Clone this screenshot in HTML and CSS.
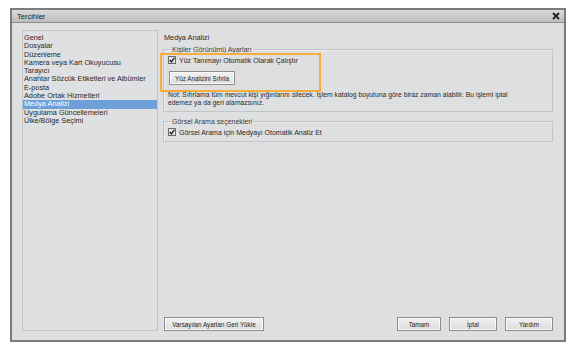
FILE: index.html
```html
<!DOCTYPE html>
<html lang="tr">
  <head>
    <meta charset="UTF-8" />
    <title>Tercihler</title>
    <link rel="stylesheet" href="styles.css">
  </head>
  <body>
    <div class="window">
      <div class="titlebar">
        <span class="title">Tercihler</span>
        <svg class="close" width="8" height="8" viewBox="0 0 8 8">
          <path d="M1 1 L7 7 M7 1 L1 7" stroke="#222" stroke-width="1.8" />
        </svg>
      </div>
      <div class="content">
        <ul class="nav">
          <li>Genel</li>
          <li>Dosyalar</li>
          <li>Düzenleme</li>
          <li>Kamera veya Kart Okuyucusu</li>
          <li>Tarayıcı</li>
          <li>Anahtar Sözcük Etiketleri ve Albümler</li>
          <li>E-posta</li>
          <li>Adobe Ortak Hizmetleri</li>
          <li class="selected">Medya Analizi</li>
          <li>Uygulama Güncellemeleri</li>
          <li>Ülke/Bölge Seçimi</li>
        </ul>
        <div class="main">
          <div class="heading">Medya Analizi</div>

          <fieldset class="group people">
            <legend>Kişiler Görünümü Ayarları</legend>
            <label class="check">
              <svg width="8" height="8" viewBox="0 0 8 8">
                <rect x="0.5" y="0.5" width="7" height="7" fill="#e6e6e6" stroke="#6a6a6a" />
                <path d="M1.8 4 L3.4 5.8 L6.4 1.8" fill="none" stroke="#1e1e1e" stroke-width="1.4" />
              </svg>
              Yüz Tanımayı Otomatik Olarak Çalıştır
            </label>
            <button class="btn reset">Yüz Analizini Sıfırla</button>
            <p class="note">Not: Sıfırlama tüm mevcut kişi yığınlarını silecek. İşlem katalog boyutuna göre biraz zaman alabilir. Bu işlemi iptal<br>edemez ya da geri alamazsınız.</p>
            <div class="highlight"></div>
          </fieldset>

          <fieldset class="group search">
            <legend>Görsel Arama seçenekleri</legend>
            <label class="check">
              <svg width="8" height="8" viewBox="0 0 8 8">
                <rect x="0.5" y="0.5" width="7" height="7" fill="#e6e6e6" stroke="#6a6a6a" />
                <path d="M1.8 4 L3.4 5.8 L6.4 1.8" fill="none" stroke="#1e1e1e" stroke-width="1.4" />
              </svg>
              Görsel Arama için Medyayı Otomatik Analiz Et
            </label>
          </fieldset>

          <div class="footer">
            <button class="btn defaults">Varsayılan Ayarları Geri Yükle</button>
            <div class="actions">
              <button class="btn ok">Tamam</button>
              <button class="btn cancel">İptal</button>
              <button class="btn help">Yardım</button>
            </div>
          </div>
        </div>
      </div>
    </div>
  </body>
</html>
```

FILE: styles.css
```css
body {
  margin: 0;
  background: #ffffff;
  font-family: "Liberation Sans", Arial, sans-serif;
  font-size: 7px;
  color: #2a2a2a;
}
.window {
  width: 552px;
  height: 330px;
  margin: 8px 0 0 10px;
  border: 2px solid #7c7c7c;
  background: #dedfe1;
  display: flex;
  flex-direction: column;
}
.titlebar {
  height: 12px;
  padding: 0 4px 0 5px;
  background: linear-gradient(#dadada, #bdbdbd);
  border-bottom: 1px solid #8e8e8e;
  display: flex;
  align-items: center;
  justify-content: space-between;
}
.title {
  font-size: 7.5px;
  color: #1e1e1e;
}
.content {
  flex: 1;
  display: flex;
  gap: 5px;
  padding: 7px 11px 9px 10px;
}
.nav {
  width: 134px;
  margin: 0;
  padding: 3px 0 0 0;
  list-style: none;
  border: 1px solid #c3c4c6;
  background: #dfe0e2;
}
.nav li {
  height: 8.3px;
  line-height: 8.3px;
  padding-left: 1px;
  font-size: 7.3px;
}
.nav li.selected {
  background: #6f9fd9;
  color: #ffffff;
}
.main {
  flex: 1;
  display: flex;
  flex-direction: column;
}
.heading {
  margin: 3px 0 0 1px;
  font-size: 7.3px;
}
.group {
  position: relative;
  margin: 0;
  padding: 0 4px 4px 4px;
  border: 1px solid #c2c3c5;
  box-shadow: inset 1px 1px 0 #ececec;
}
.group legend {
  padding: 0 1px;
  margin-left: 3px;
  font-size: 7px;
  color: #3a3a3a;
}
.people {
  margin-top: 4px;
  height: 60px;
}
.search {
  margin-top: 6px;
  height: 18px;
}
.check {
  display: flex;
  align-items: center;
  gap: 3px;
  height: 10px;
  font-size: 7px;
}
.people .check {
  margin-top: 2px;
}
.search .check {
  margin-top: 2px;
}
.btn {
  font-family: inherit;
  font-size: 6.3px;
  color: #222;
  height: 14px;
  padding: 0 4px;
  white-space: nowrap;
  border: 1px solid #8d8d8d;
  background: linear-gradient(#f2f2f2, #dcdcdc);
  box-shadow: inset 0 0 0 1px #fafafa;
}
.reset {
  display: block;
  margin: 6px 0 0 1px;
  width: 66px;
}
.note {
  margin: 6px 0 0 0;
  line-height: 8px;
  font-size: 6.8px;
  white-space: nowrap;
}
.highlight {
  position: absolute;
  left: -4px;
  top: 0;
  width: 157px;
  height: 35px;
  border: 2px solid #f6ad3c;
}
.footer {
  margin-top: auto;
  display: flex;
  justify-content: space-between;
  align-items: center;
}
.defaults {
  width: 100px;
  margin-left: 1px;
}
.actions {
  display: flex;
  gap: 8px;
}
.ok {
  width: 44px;
}
.cancel {
  width: 48px;
}
.help {
  width: 48px;
}
```
